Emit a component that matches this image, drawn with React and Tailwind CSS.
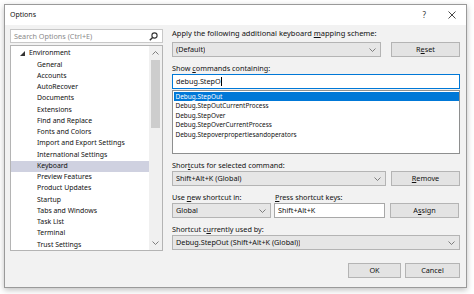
import React from 'react';

const font = { fontFamily: '"Noto Sans", "Segoe UI", sans-serif' };

const Chevron = ({ up = false }) => (
  <svg width="7" height="4" viewBox="0 0 7 4" className="shrink-0">
    <path
      d={up ? 'M0.5 3.5 L3.5 0.5 L6.5 3.5' : 'M0.5 0.5 L3.5 3.5 L6.5 0.5'}
      fill="none"
      stroke="#707070"
      strokeWidth="0.9"
    />
  </svg>
);

const Combo = ({ children, className = '' }) => (
  <div className={`flex items-center justify-between h-[15px] border border-[#b4b4b4] bg-[#e6e6e6] pl-[3px] pr-[4px] ${className}`}>
    <span className="truncate">{children}</span>
    <Chevron />
  </div>
);

const Btn = ({ children, className = '' }) => (
  <div className={`flex items-center justify-center h-[15px] border border-[#b4b4b4] bg-[#e3e3e3] ${className}`}>
    <span>{children}</span>
  </div>
);

const K = ({ children }) => <u className="underline-offset-[1px]">{children}</u>;

const Label = ({ children, className = '' }) => (
  <div className={`h-[12px] flex items-center ${className}`}>
    <span>{children}</span>
  </div>
);

const treeItems = [
  'General',
  'Accounts',
  'AutoRecover',
  'Documents',
  'Extensions',
  'Find and Replace',
  'Fonts and Colors',
  'Import and Export Settings',
  'International Settings',
  'Keyboard',
  'Preview Features',
  'Product Updates',
  'Startup',
  'Tabs and Windows',
  'Task List',
  'Terminal',
  'Trust Settings',
];

const commands = [
  'Debug.StepOut',
  'Debug.StepOutCurrentProcess',
  'Debug.StepOver',
  'Debug.StepOverCurrentProcess',
  'Debug.Stepoverpropertiesandoperators',
];

const App = () => {
  return (
    <div className="w-[474px] h-[294px] bg-white pl-[4px] pt-[4px] text-[7.25px] text-[#111]" style={font}>
      <div className="w-[463px] h-[284px] border border-[#9a9a9a] bg-[#f2f2f2] flex flex-col shadow-[0_2px_6px_rgba(0,0,0,0.25)]">
        {/* title bar */}
        <div className="h-[20px] bg-white flex items-center pl-[5px] pr-[10px] shrink-0">
          <span className="text-[7px] flex-1">Options</span>
          <span className="text-[8px] mr-[22px] text-[#333]">?</span>
          <svg width="8" height="8" viewBox="0 0 8 8">
            <path d="M0.5 0.5 L7.5 7.5 M7.5 0.5 L0.5 7.5" stroke="#333" strokeWidth="0.9" />
          </svg>
        </div>

        <div className="flex flex-1 pl-[5px] pr-[6px]">
          {/* left panel */}
          <div className="w-[153px] flex flex-col pt-[4px]">
            <div className="h-[14px] border border-[#c8c8c8] bg-white flex items-center pl-[3px] pr-[4px]">
              <span className="flex-1 text-[#8a8a8a]">Search Options (Ctrl+E)</span>
              <svg width="9" height="9" viewBox="0 0 9 9">
                <circle cx="5.5" cy="3.5" r="2.6" fill="none" stroke="#333" strokeWidth="1.1" />
                <path d="M3.6 5.4 L0.8 8.2" stroke="#333" strokeWidth="1.4" />
              </svg>
            </div>
            <div className="mt-[2px] h-[206px] border border-[#b4b4b4] bg-white flex text-[6.9px]">
              <div className="flex-1 pt-[2px]">
                <div className="h-[11.25px] flex items-center pl-[9px]">
                  <svg width="5" height="5" viewBox="0 0 5 5" className="mr-[4px]">
                    <polygon points="5,0 5,5 0,5" fill="#333" />
                  </svg>
                  <span>Environment</span>
                </div>
                {treeItems.map((t) => (
                  <div
                    key={t}
                    className={`h-[11.25px] flex items-center pl-[26px] ${t === 'Keyboard' ? 'bg-[#cfd1e0]' : ''}`}
                  >
                    {t}
                  </div>
                ))}
              </div>
              <div className="w-[13px] flex flex-col items-center bg-[#f0f0f0]">
                <div className="h-[12px] flex items-center pt-[2px]">
                  <Chevron up />
                </div>
                <div className="w-[9px] h-[68px] bg-[#cdcdcd] mt-[2px]" />
                <div className="flex-1" />
                <div className="h-[12px] flex items-center pb-[2px]">
                  <Chevron />
                </div>
              </div>
            </div>
          </div>

          {/* right panel */}
          <div className="flex-1 ml-[9px] flex flex-col">
            <Label className="mt-[3px] text-[7.5px]">
              Apply the following additional keyboard <K>m</K>apping scheme:
            </Label>
            <div className="flex mt-[2px] gap-[10px]">
              <Combo className="flex-1">(Default)</Combo>
              <Btn className="w-[69px]">R<K>e</K>set</Btn>
            </div>
            <Label className="mt-[5px]">
              Show <K>c</K>ommands containing:
            </Label>
            <div className="h-[15px] border border-[#0078d7] bg-white flex items-center pl-[3px]">
              <span>debug.StepO</span>
              <span className="w-[0.7px] h-[9px] bg-black" />
            </div>
            <div className="h-[64px] mt-[1px] border border-[#8e8f8f] bg-white pt-[0.5px] px-[0.5px] text-[6.45px]">
              {commands.map((c, i) => (
                <div
                  key={c}
                  className={`h-[9.6px] leading-[9.6px] pl-[2px] ${i === 0 ? 'bg-[#0078d7] text-white' : ''}`}
                >
                  {c}
                </div>
              ))}
            </div>
            <Label className="mt-[5px]">
              Shor<K>t</K>cuts for selected command:
            </Label>
            <div className="flex gap-[5px]">
              <Combo className="flex-1">Shift+Alt+K (Global)</Combo>
              <Btn className="w-[69px]"><K>R</K>emove</Btn>
            </div>
            <div className="h-[12px] mt-[5px] flex">
              <span className="w-[103px] flex items-center">
                <span>Use <K>n</K>ew shortcut in:</span>
              </span>
              <span className="flex items-center">
                <span><K>P</K>ress shortcut keys:</span>
              </span>
            </div>
            <div className="flex">
              <Combo className="w-[99px]">Global</Combo>
              <div className="w-[111px] ml-[3px] h-[15px] border border-[#a8a8a8] bg-white flex items-center pl-[3px]">
                <span>Shift+Alt+K</span>
              </div>
              <Btn className="w-[69px] ml-[5px]">A<K>s</K>sign</Btn>
            </div>
            <Label className="mt-[5px]">
              Shortcut c<K>u</K>rrently used by:
            </Label>
            <Combo>Debug.StepOut (Shift+Alt+K (Global))</Combo>
            <div className="flex justify-end mt-[13px] gap-[4px]">
              <Btn className="w-[53px] border-[#0078d7]">OK</Btn>
              <Btn className="w-[55px]">Cancel</Btn>
            </div>
          </div>
        </div>
      </div>
    </div>
  );
};

export default App;
